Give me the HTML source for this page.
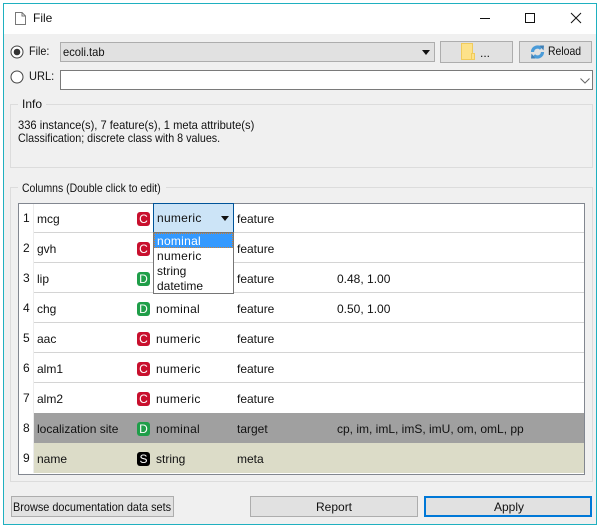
<!DOCTYPE html>
<html><head><meta charset="utf-8">
<style>
html,body{margin:0;padding:0;background:#fff;}
#r{position:relative;width:603px;height:528px;overflow:hidden;background:#fff;font:12px/15px "Liberation Sans",sans-serif;color:#111;}
#r div,#r svg{position:absolute;box-sizing:border-box;white-space:nowrap;}
.t{height:15px;transform-origin:0 50%;}
.btn{background:#e1e1e1;border:1px solid #adadad;}
.sep{left:34px;width:550px;height:1px;background:#d4d4d4;}
.badge{width:13px;height:14px;border-radius:3px;color:#fff;font-size:12px;line-height:14px;text-align:center;left:137px;}
.c{background:#c8102e;}.d{background:#1f9e49;}.s{background:#000;}
.num{left:23px;}
.w{letter-spacing:.28px;}
</style></head><body><div id="r">
<div style="left:3px;top:3px;width:594px;height:522px;border:1px solid #1fb0c0;background:#f0f0f0;"></div>
<div style="left:4px;top:4px;width:592px;height:30px;background:#fff;"></div>
<svg style="left:15px;top:12px" width="11" height="13" viewBox="0 0 11 13"><path d="M.5.5H7L10.5 4V12.5H.5Z M7 .5V4H10.5" fill="#fff" stroke="#777"/></svg>
<div class="t" style="left:33px;top:11px;">File</div>
<svg style="left:478px;top:12px" width="110" height="14" viewBox="0 0 110 14"><path d="M2 6.5H12" stroke="#111"/><rect x="47.5" y="1.5" width="9" height="9" fill="none" stroke="#111"/><path d="M93 1L103 11M103 1L93 11" stroke="#111" fill="none"/></svg>

<svg style="left:10px;top:45px" width="14" height="14" viewBox="0 0 14 14"><circle cx="7" cy="7" r="6" fill="#fff" stroke="#444"/><circle cx="7" cy="7" r="3.3" fill="#333"/></svg>
<div class="t" style="left:29px;top:44px;transform:scaleX(.9);">File:</div>
<div class="btn" style="left:60px;top:42px;width:375px;height:20px;"></div>
<div class="t" style="left:63px;top:45px;transform:scaleX(.93);">ecoli.tab</div>
<svg style="left:422px;top:50px" width="8" height="5"><path d="M0 0H8L4 5Z" fill="#111"/></svg>
<div class="btn" style="left:440px;top:41px;width:73px;height:22px;"></div>
<svg style="left:461px;top:43px" width="15" height="18" viewBox="0 0 15 18"><rect x=".5" y=".5" width="11" height="16" fill="#fde28a" stroke="#f0cb5c"/><rect x="10.5" y="10.5" width="3" height="6" fill="#fde28a" stroke="#f0cb5c"/></svg>
<div class="t" style="left:480px;top:46px;">...</div>
<div class="btn" style="left:519px;top:41px;width:73px;height:22px;"></div>
<svg style="left:530px;top:44px" width="15" height="16" viewBox="0 0 15 16"><path d="M2.5 8a5 5 0 0 1 8.6-3.4M12.5 8a5 5 0 0 1-8.6 3.4" fill="none" stroke="#4a9bd8" stroke-width="3.2"/><path d="M9.5 1.5L14 1.5 13.500 6.500ZM5.500 14.500L1 14.500 1.500 9.500Z" fill="#3f7fb5"/></svg>
<div class="t" style="left:548px;top:44px;transform:scaleX(.87);">Reload</div>

<svg style="left:10px;top:70px" width="14" height="14" viewBox="0 0 14 14"><circle cx="7" cy="7" r="6" fill="#fff" stroke="#444"/></svg>
<div class="t" style="left:29px;top:69px;transform:scaleX(.92);">URL:</div>
<div style="left:60px;top:70px;width:533px;height:20px;background:#fff;border:1px solid #7a7a7a;"></div>
<svg style="left:580px;top:78px" width="10" height="6"><path d="M.5.5L5 5L9.5.5" fill="none" stroke="#666"/></svg>

<div style="left:10px;top:104px;width:583px;height:64px;border:1px solid #dcdcdc;"></div>
<div class="t" style="left:18px;top:97px;padding:0 4px;background:#f0f0f0;">Info</div>
<div class="t" style="left:18px;top:118px;transform:scaleX(.93);">336 instance(s), 7 feature(s), 1 meta attribute(s)</div>
<div class="t" style="left:18px;top:131px;transform:scaleX(.894);">Classification; discrete class with 8 values.</div>

<div style="left:10px;top:187px;width:583px;height:295px;border:1px solid #dcdcdc;"></div>
<div style="left:18px;top:181px;width:148px;height:15px;background:#f0f0f0;"></div>
<div class="t" style="left:22px;top:181px;transform:scaleX(.87);">Columns (Double click to edit)</div>

<div style="left:18px;top:203px;width:567px;height:272px;background:#fff;border:1px solid #828790;"></div>
<div style="left:33px;top:204px;width:1px;height:269px;background:#ececec;"></div>
<div class="sep" style="top:232px;"></div><div class="sep" style="top:262px;"></div><div class="sep" style="top:292px;"></div><div class="sep" style="top:322px;"></div><div class="sep" style="top:352px;"></div><div class="sep" style="top:382px;"></div>
<div style="left:34px;top:413px;width:550px;height:30px;background:#a0a0a0;"></div>
<div style="left:34px;top:443px;width:550px;height:30px;background:#dcdcc8;"></div>

<div class="t num" style="top:211px;">1</div><div class="t num" style="top:241px;">2</div><div class="t num" style="top:271px;">3</div><div class="t num" style="top:301px;">4</div><div class="t num" style="top:331px;">5</div><div class="t num" style="top:361px;">6</div><div class="t num" style="top:391px;">7</div><div class="t num" style="top:421px;">8</div><div class="t num" style="top:451px;">9</div>

<div class="t" style="left:37px;top:212px;">mcg</div><div class="badge c" style="top:212px;">C</div><div class="t" style="left:237px;top:212px;">feature</div>
<div class="t" style="left:37px;top:242px;">gvh</div><div class="badge c" style="top:242px;">C</div><div class="t" style="left:237px;top:242px;">feature</div>
<div class="t" style="left:37px;top:272px;">lip</div><div class="badge d" style="top:272px;">D</div><div class="t" style="left:237px;top:272px;">feature</div><div class="t" style="left:337px;top:272px;">0.48, 1.00</div>
<div class="t" style="left:37px;top:302px;">chg</div><div class="badge d" style="top:302px;">D</div><div class="t w" style="left:156px;top:302px;">nominal</div><div class="t" style="left:237px;top:302px;">feature</div><div class="t" style="left:337px;top:302px;">0.50, 1.00</div>
<div class="t" style="left:37px;top:332px;">aac</div><div class="badge c" style="top:332px;">C</div><div class="t w" style="left:156px;top:332px;">numeric</div><div class="t" style="left:237px;top:332px;">feature</div>
<div class="t" style="left:37px;top:362px;">alm1</div><div class="badge c" style="top:362px;">C</div><div class="t w" style="left:156px;top:362px;">numeric</div><div class="t" style="left:237px;top:362px;">feature</div>
<div class="t" style="left:37px;top:392px;">alm2</div><div class="badge c" style="top:392px;">C</div><div class="t w" style="left:156px;top:392px;">numeric</div><div class="t" style="left:237px;top:392px;">feature</div>
<div class="t" style="left:37px;top:422px;">localization site</div><div class="badge d" style="top:422px;">D</div><div class="t w" style="left:156px;top:422px;">nominal</div><div class="t" style="left:237px;top:422px;">target</div><div class="t" style="left:337px;top:422px;">cp, im, imL, imS, imU, om, omL, pp</div>
<div class="t" style="left:37px;top:452px;">name</div><div class="badge s" style="top:452px;">S</div><div class="t" style="left:156px;top:452px;">string</div><div class="t" style="left:237px;top:452px;">meta</div>

<div style="left:153px;top:203px;width:81px;height:30px;background:#cce4f7;border:1px solid #005499;"></div>
<div class="t w" style="left:157px;top:211px;">numeric</div>
<svg style="left:221px;top:216px" width="8" height="5"><path d="M0 0H8L4 5Z" fill="#111"/></svg>
<div style="left:153px;top:232px;width:81px;height:62px;background:#fff;border:1px solid #767676;"></div>
<div style="left:154px;top:233px;width:79px;height:15px;background:#3399ff;border:1px dotted #d08030;"></div>
<div class="t w" style="left:157px;top:234px;color:#fff;">nominal</div>
<div class="t w" style="left:157px;top:249px;">numeric</div>
<div class="t" style="left:157px;top:264px;">string</div>
<div class="t" style="left:157px;top:279px;">datetime</div>

<div class="btn" style="left:11px;top:496px;width:163px;height:21px;"></div>
<div class="t" style="left:13px;top:500px;transform:scaleX(.908);">Browse documentation data sets</div>
<div class="btn" style="left:250px;top:496px;width:168px;height:21px;"></div>
<div class="t" style="left:316px;top:500px;">Report</div>
<div class="btn" style="left:424px;top:496px;width:168px;height:21px;border:2px solid #0078d7;"></div>
<div class="t" style="left:494px;top:500px;">Apply</div>
</div></body></html>
